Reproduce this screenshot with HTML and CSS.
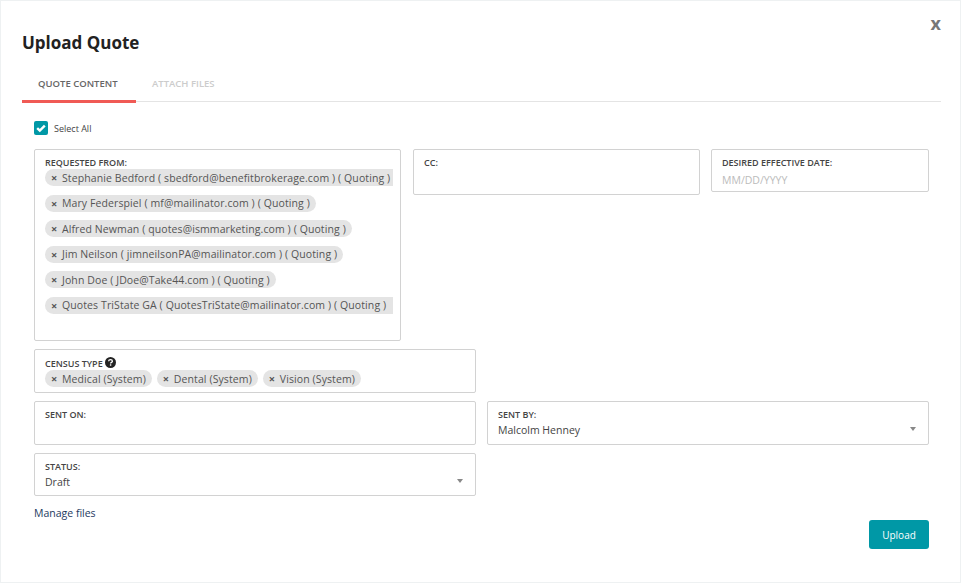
FILE: index.html
```html
<!DOCTYPE html>
<html lang="en">
<head>
<meta charset="utf-8">
<title>Upload Quote</title>
<link rel="stylesheet" href="styles.css">
</head>
<body>
<div class="modal">
  <button class="close" type="button">x</button>
  <h1 class="title">Upload Quote</h1>
  <div class="tabs">
    <div class="tab tab-active">QUOTE CONTENT</div>
    <div class="tab tab-muted">ATTACH FILES</div>
  </div>
  <div class="form">
    <label class="select-all">
      <span class="check"><svg width="14" height="14" viewBox="0 0 14 14"><path d="M3.2 7.2 5.8 9.6 10.8 4.6" fill="none" stroke="#fff" stroke-width="2.4"/></svg></span>
      <span>Select All</span>
    </label>
    <div class="row row-top">
      <div class="box box-requested">
        <div class="label">REQUESTED FROM:</div>
        <div class="chips-stack">
          <div class="chip chip-clip"><span class="x">×</span><span class="chip-text">Stephanie Bedford ( sbedford@benefitbrokerage.com ) ( Quoting )</span></div>
          <div class="chip"><span class="x">×</span><span class="chip-text">Mary Federspiel ( mf@mailinator.com ) ( Quoting )</span></div>
          <div class="chip"><span class="x">×</span><span class="chip-text">Alfred Newman ( quotes@ismmarketing.com ) ( Quoting )</span></div>
          <div class="chip"><span class="x">×</span><span class="chip-text">Jim Neilson ( jimneilsonPA@mailinator.com ) ( Quoting )</span></div>
          <div class="chip"><span class="x">×</span><span class="chip-text">John Doe ( JDoe@Take44.com ) ( Quoting )</span></div>
          <div class="chip chip-clip"><span class="x">×</span><span class="chip-text">Quotes TriState GA ( QuotesTriState@mailinator.com ) ( Quoting )</span></div>
        </div>
      </div>
      <div class="box box-cc"><div class="label">CC:</div></div>
      <div class="box box-date">
        <div class="label">DESIRED EFFECTIVE DATE:</div>
        <div class="placeholder">MM/DD/YYYY</div>
      </div>
    </div>
    <div class="row">
      <div class="box box-half box-census">
        <div class="label">CENSUS TYPE
          <svg class="help" width="11" height="11" viewBox="0 0 11 11"><circle cx="5.5" cy="5.5" r="5.5" fill="#222"/><path d="M3.6 4.3C3.7 3.2 4.5 2.7 5.5 2.7 6.6 2.7 7.4 3.3 7.4 4.2 7.4 5.4 5.6 5.4 5.6 6.5" fill="none" stroke="#fff" stroke-width="1.3"/><rect x="4.9" y="7.3" width="1.4" height="1.4" fill="#fff"/></svg>
        </div>
        <div class="chips-inline">
          <div class="chip"><span class="x">×</span><span class="chip-text">Medical (System)</span></div>
          <div class="chip"><span class="x">×</span><span class="chip-text">Dental (System)</span></div>
          <div class="chip"><span class="x">×</span><span class="chip-text">Vision (System)</span></div>
        </div>
      </div>
    </div>
    <div class="row row-gap">
      <div class="box box-half box-sent"><div class="label">SENT ON:</div></div>
      <div class="box box-half box-sent">
        <div class="label">SENT BY:</div>
        <div class="value">Malcolm Henney</div>
        <span class="caret"></span>
      </div>
    </div>
    <div class="row">
      <div class="box box-half box-status">
        <div class="label">STATUS:</div>
        <div class="value">Draft</div>
        <span class="caret"></span>
      </div>
    </div>
    <a class="manage" href="#">Manage files</a>
    <div class="actions"><button class="upload" type="button">Upload</button></div>
  </div>
</div>
</body>
</html>
```
FILE: styles.css
```css
* { box-sizing: border-box; }
html, body { margin: 0; height: 100%; }
body {
  background: #eef1f2;
  font-family: "Open Sans", "Noto Sans", sans-serif;
  color: #333;
  overflow: hidden;
}
.modal {
  position: relative;
  margin: 1px 1px 1px 1px;
  height: 581px;
  background: #fff;
  padding: 33px 21px 0 21px;
}
.close {
  position: absolute;
  top: 10px;
  right: 19px;
  border: 0;
  background: none;
  padding: 0;
  font: 700 18px/24px "Open Sans", sans-serif;
  color: #777;
}
.title {
  margin: 0;
  font: 700 17px/18px "Open Sans", sans-serif;
  color: #222;
}
.tabs {
  display: flex;
  margin-top: 21px;
  width: 919px;
  height: 29px;
  border-bottom: 1px solid #e4e4e4;
}
.tab {
  height: 30px;
  padding: 4px 16px 0;
  font-size: 9.5px;
  line-height: 13px;
  font-weight: 600;
}
.tab-active {
  width: 114px;
  color: #666;
  border-bottom: 3px solid #f05a55;
  white-space: nowrap;
}
.tab-muted { color: #ccc; }
.form {
  width: 895px;
  margin-left: 12px;
  padding-top: 19px;
}
.select-all {
  display: flex;
  align-items: center;
  gap: 6px;
  height: 14px;
  font-size: 9px;
  color: #444;
}
.check {
  display: flex;
  width: 14px;
  height: 14px;
  background: #0098a6;
  border-radius: 2px;
}
.row {
  display: flex;
  margin-top: 8px;
}
.row-gap { gap: 11px; }
.row-top {
  margin-top: 14px;
  align-items: flex-start;
}
.box {
  position: relative;
  border: 1px solid #d2d2d2;
  border-radius: 2px;
  padding: 7px 10px 0;
  background: #fff;
}
.box-requested { width: 367px; height: 192px; }
.box-cc { width: 287px; height: 46px; margin-left: 12px; }
.box-date { width: 218px; height: 43px; margin-left: 11px; }
.box-half { width: 442px; }
.box-census { height: 44px; }
.box-sent { height: 44px; }
.box-status { height: 43px; }
.label {
  font-size: 9px;
  line-height: 12px;
  font-weight: 600;
  color: #444;
}
.help { vertical-align: -1px; }
.placeholder {
  margin-top: 4px;
  font-size: 10.5px;
  line-height: 14px;
  color: #bbb;
}
.value {
  margin: 2px 0 0 0;
  font-size: 10.5px;
  line-height: 15px;
  color: #444;
}
.caret {
  position: absolute;
  right: 12px;
  top: 25px;
  border-left: 3.5px solid transparent;
  border-right: 3.5px solid transparent;
  border-top: 4px solid #888;
}
.chips-stack {
  display: flex;
  flex-direction: column;
  align-items: flex-start;
  gap: 8.6px;
}
.chips-inline {
  display: flex;
  gap: 5px;
}
.chip {
  display: flex;
  align-items: center;
  height: 17px;
  max-width: 348px;
  padding: 0 6px 0 6px;
  border-radius: 9px;
  background: #e4e4e4;
  font-size: 10.5px;
  color: #555;
  white-space: nowrap;
  overflow: hidden;
}
.chip-clip { border-radius: 9px 0 0 9px; width: 348px; padding-right: 0; }
.x {
  width: 11px;
  flex: none;
  font-weight: 700;
  font-size: 11px;
}
.chip-text { letter-spacing: 0.1px; }
.manage {
  display: block;
  margin-top: 10px;
  font-size: 10.5px;
  line-height: 14px;
  color: #1d3a5f;
  text-decoration: none;
}
.actions {
  display: flex;
  justify-content: flex-end;
  margin-top: 0;
}
.upload {
  width: 60px;
  height: 29px;
  border: 0;
  border-radius: 3px;
  background: #0098a6;
  color: #fff;
  font: 400 10px "Open Sans", sans-serif;
}
```
